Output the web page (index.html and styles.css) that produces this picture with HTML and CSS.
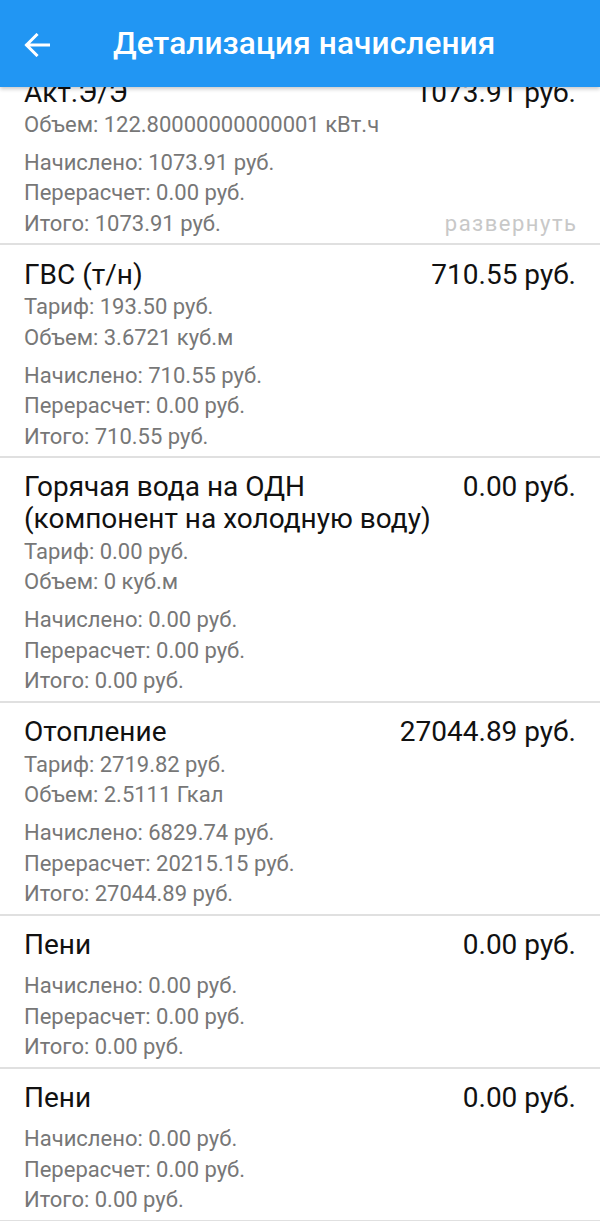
FILE: index.html
```html
<!DOCTYPE html>
<html lang="ru">
<head>
<meta charset="utf-8">
<title>Детализация начисления</title>
<link rel="stylesheet" href="styles.css">
</head>
<body>
<header class="appbar">
  <svg class="back" width="26" height="24" viewBox="0 0 26 24" aria-hidden="true">
    <path d="M24.5 12H3M12.5 2L2.5 12l10 10" fill="none" stroke="#fff" stroke-width="3" stroke-linecap="square"/>
  </svg>
  <h1 class="title">Детализация начисления</h1>
</header>
<main class="list">
  <section class="item">
    <div class="head"><span class="name">Акт.Э/Э</span><span class="sum">1073.91 руб.</span></div>
    <div class="group g1"><div class="line">Объем: 122.80000000000001 кВт.ч</div></div>
    <div class="group g2">
      <div class="line">Начислено: 1073.91 руб.</div>
      <div class="line">Перерасчет: 0.00 руб.</div>
      <div class="line row"><span>Итого: 1073.91 руб.</span><span class="expand">развернуть</span></div>
    </div>
  </section>
  <section class="item">
    <div class="head"><span class="name">ГВС (т/н)</span><span class="sum">710.55 руб.</span></div>
    <div class="group g1">
      <div class="line">Тариф: 193.50 руб.</div>
      <div class="line">Объем: 3.6721 куб.м</div>
    </div>
    <div class="group g2">
      <div class="line">Начислено: 710.55 руб.</div>
      <div class="line">Перерасчет: 0.00 руб.</div>
      <div class="line">Итого: 710.55 руб.</div>
    </div>
  </section>
  <section class="item">
    <div class="head two"><span class="name">Горячая вода на ОДН<br>(компонент на холодную воду)</span><span class="sum">0.00 руб.</span></div>
    <div class="group g1">
      <div class="line">Тариф: 0.00 руб.</div>
      <div class="line">Объем: 0 куб.м</div>
    </div>
    <div class="group g2">
      <div class="line">Начислено: 0.00 руб.</div>
      <div class="line">Перерасчет: 0.00 руб.</div>
      <div class="line">Итого: 0.00 руб.</div>
    </div>
  </section>
  <section class="item">
    <div class="head"><span class="name">Отопление</span><span class="sum">27044.89 руб.</span></div>
    <div class="group g1">
      <div class="line">Тариф: 2719.82 руб.</div>
      <div class="line">Объем: 2.5111 Гкал</div>
    </div>
    <div class="group g2">
      <div class="line">Начислено: 6829.74 руб.</div>
      <div class="line">Перерасчет: 20215.15 руб.</div>
      <div class="line">Итого: 27044.89 руб.</div>
    </div>
  </section>
  <section class="item">
    <div class="head"><span class="name">Пени</span><span class="sum">0.00 руб.</span></div>
    <div class="group g2 solo">
      <div class="line">Начислено: 0.00 руб.</div>
      <div class="line">Перерасчет: 0.00 руб.</div>
      <div class="line">Итого: 0.00 руб.</div>
    </div>
  </section>
  <section class="item">
    <div class="head"><span class="name">Пени</span><span class="sum">0.00 руб.</span></div>
    <div class="group g2 solo">
      <div class="line">Начислено: 0.00 руб.</div>
      <div class="line">Перерасчет: 0.00 руб.</div>
      <div class="line">Итого: 0.00 руб.</div>
    </div>
  </section>
</main>
</body>
</html>
```

FILE: styles.css
```css
html, body {
  margin: 0;
  padding: 0;
}
body {
  width: 600px;
  height: 1221px;
  overflow: hidden;
  background: #fff;
  font-family: Roboto, "Noto Sans", sans-serif;
}
.appbar {
  position: relative;
  z-index: 2;
  height: 87px;
  background: #2196f3;
  display: flex;
  align-items: center;
  padding: 0 0 0 24px;
  box-shadow: 0 2px 4px rgba(0,0,0,0.22);
}
.back {
  display: block;
  margin-top: 2px;
}
.title {
  margin: 0 0 0 63px;
  color: #fff;
  font-size: 31.6px;
  font-weight: 500;
  letter-spacing: 0.1px;
}
.list {
  margin-top: -24px;
}
.item {
  padding: 12.5px 24px 4px;
  border-bottom: 2px solid #e0e0e0;
}
.head {
  display: flex;
  justify-content: space-between;
  align-items: flex-start;
  font-size: 28px;
  line-height: 33px;
  color: #111;
}
.head.two {
  line-height: 32.5px;
}
.group {
  font-size: 22px;
  line-height: 30.5px;
  color: #777;
}
.g1 {
  margin-top: 1.25px;
}
.g2 {
  margin-top: 7.5px;
}
.g2.solo {
  margin-top: 10px;
}
.row {
  display: flex;
  justify-content: space-between;
}
.expand {
  color: #c8c8c8;
  letter-spacing: 1.5px;
  margin-right: -1.5px;
}
```
